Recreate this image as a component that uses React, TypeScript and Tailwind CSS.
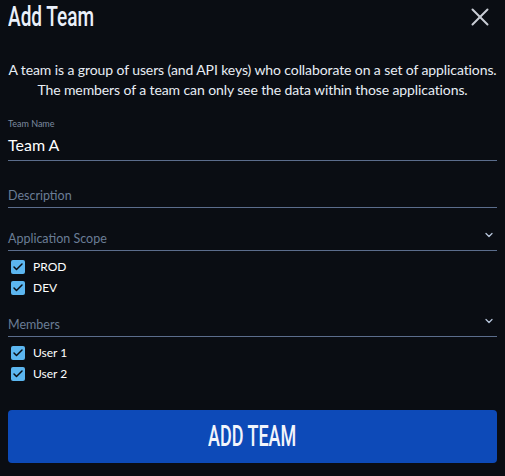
import { X, ChevronDown, Check } from "lucide-react"

const condensed = { fontFamily: "Roboto, sans-serif" }

function CheckRow({ label }: { label: string }) {
  return (
    <label className="flex items-center gap-[8px] h-[21px] pl-[3px]">
      <span className="flex items-center justify-center w-[14px] h-[14px] rounded-[2px] bg-[#5cb6f0]">
        <Check className="w-[12px] h-[12px] text-[#0a0d13]" strokeWidth={3} />
      </span>
      <span className="text-[12px] text-white">{label}</span>
    </label>
  )
}

function SelectField({ label, items }: { label: string; items: string[] }) {
  return (
    <div>
      <div className="flex items-start justify-between border-b border-[#5b6d8c] h-[20px]">
        <span className="text-[12.5px] leading-[16px] text-[#6a7d96]">{label}</span>
        <ChevronDown className="w-[12px] h-[12px] text-[#b8c6dc] mr-[2px] -mt-[2px]" strokeWidth={2.5} />
      </div>
      <div className="flex flex-col mt-[5px]">
        {items.map((item) => (
          <CheckRow key={item} label={item} />
        ))}
      </div>
    </div>
  )
}

export default function App() {
  return (
    <div className="w-[505px] h-[476px] bg-[#0a0d13] text-white px-[8px]" style={{ fontFamily: "Lato, sans-serif" }}>
      <div className="flex items-center justify-between h-[34px]">
        <h1 className="text-[28px] font-medium leading-[34px] text-[#eaf0fa] inline-block origin-left scale-x-[0.68] whitespace-nowrap" style={condensed}>
          Add Team
        </h1>
        <X className="w-[30px] h-[30px] text-[#c8ccd4] mr-[2px]" strokeWidth={1.6} />
      </div>

      <p className="mt-[26px] text-center text-[14px] leading-[20px] text-[#e8eef5] whitespace-nowrap tracking-[-0.1px]">
        A team is a group of users (and API keys) who collaborate on a set of applications.
        <br />
        The members of a team can only see the data within those applications.
      </p>

      <div className="mt-[18px] border-b border-[#5b6d8c] pb-[3px]">
        <div className="text-[9px] leading-[12px] text-[#7d8ba0]">Team Name</div>
        <div className="text-[16px] leading-[24px] text-white pt-[3px]">Team A</div>
      </div>

      <div className="mt-[27px] flex items-start border-b border-[#5b6d8c] h-[20px]">
        <span className="text-[12.5px] leading-[16px] text-[#6a7d96]">Description</span>
      </div>

      <div className="mt-[23px]">
        <SelectField label="Application Scope" items={["PROD", "DEV"]} />
      </div>

      <div className="mt-[19px]">
        <SelectField label="Members" items={["User 1", "User 2"]} />
      </div>

      <button className="mt-[26px] w-full h-[53px] rounded-[4px] bg-[#0d4ab8] text-[#f2f5fb] flex items-center justify-center">
        <span className="inline-block text-[29px] font-medium scale-x-[0.62] whitespace-nowrap" style={condensed}>
          ADD TEAM
        </span>
      </button>
    </div>
  )
}
